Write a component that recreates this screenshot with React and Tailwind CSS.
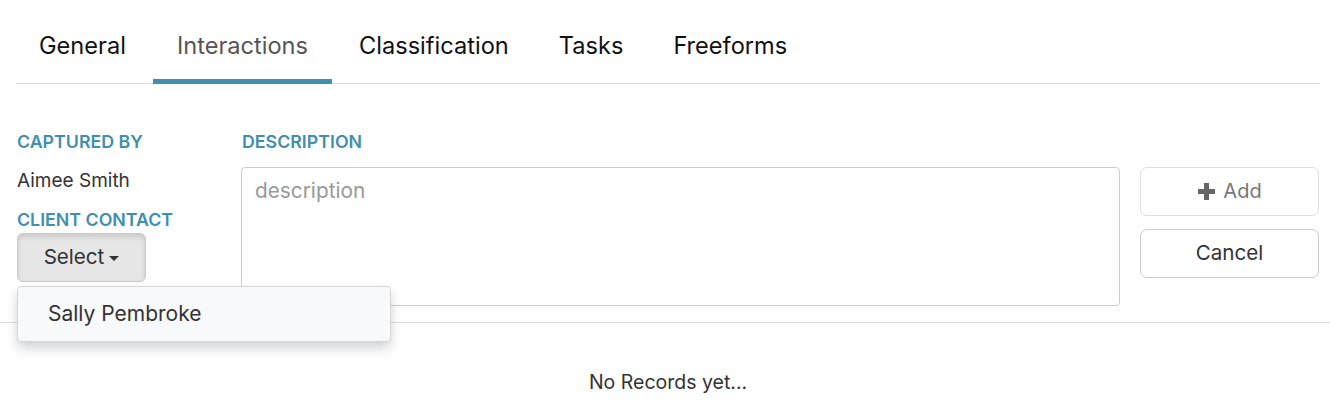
import React from "react";

const tabs = ["General", "Interactions", "Classification", "Tasks", "Freeforms"];

export default function App() {
  return (
    <div className="w-[1330px] h-[412px] bg-white overflow-hidden text-[#333]" style={{ fontFamily: "Inter, 'Noto Sans', sans-serif" }}>
      {/* Tabs */}
      <div className="ml-[16px] mr-[10px] h-[84px] border-b border-[#dddddd] flex gap-[4px]">
        {tabs.map((t) => {
          const active = t === "Interactions";
          return (
            <div
              key={t}
              className={
                active
                  ? "px-[24px] pt-[32px] pb-[20px] h-[84px] border-b-[5px] border-[#3f8fae] text-[23.6px] leading-[27px] text-[#555555]"
                  : "px-[23px] pt-[32px] pb-[20px] h-[84px] border-b-[5px] border-transparent text-[23.6px] leading-[27px] text-[#111111]"
              }
            >
              {t}
            </div>
          );
        })}
      </div>

      {/* Form */}
      <div className="pl-[17px] pr-[11px] pt-[48px] pb-[16px] flex">
        <div className="w-[224px] flex flex-col">
          <div className="text-[17.8px] leading-[20px] font-semibold text-[#3f8fae]">CAPTURED BY</div>
          <div className="mt-[17px] text-[19px] leading-[24px] text-[#333]">Aimee Smith</div>
          <div className="mt-[17px] text-[17.8px] leading-[20px] font-semibold text-[#3f8fae]">CLIENT CONTACT</div>
          <div className="relative mt-[3px]">
            <button className="w-[129px] h-[49px] rounded-[6px] bg-[#e6e6e6] border border-[#c8c8c8] shadow-[inset_0_3px_5px_rgba(0,0,0,0.125)] flex items-center justify-center gap-[5px] text-[20.6px] text-[#333]">
              <span>Select</span>
              <span className="w-0 h-0 border-l-[5px] border-r-[5px] border-t-[5px] border-l-transparent border-r-transparent border-t-[#333] mt-[2px]"></span>
            </button>
            <div className="absolute left-0 top-[53px] w-[374px] h-[56px] bg-[#f8f9fa] border border-[#d6d6d6] rounded-[4px] shadow-[0_6px_12px_rgba(0,0,0,0.175)] flex items-center pl-[30px] text-[21px] text-[#333] z-10">
              Sally Pembroke
            </div>
          </div>
        </div>

        <div className="w-[879px] flex flex-col">
          <div className="text-[17.8px] leading-[20px] font-semibold text-[#3f8fae] pl-[1px]">DESCRIPTION</div>
          <div className="mt-[14.5px] h-[139px] border border-[#cccccc] rounded-[4px] px-[13px] pt-[10px] text-[20.8px] leading-[26px] text-[#999999]">
            description
          </div>
        </div>

        <div className="ml-[20px] pt-[34.5px] w-[179px] flex flex-col gap-[13px]">
          <button className="h-[49px] border border-[#dddddd] rounded-[7px] flex items-center justify-center gap-[7px] text-[20px] text-[#777777]">
            <svg width="19" height="19" viewBox="0 0 19 19"><path d="M9.5 1V18M1 9.5H18" stroke="#666" strokeWidth="5" /></svg>
            <span>Add</span>
          </button>
          <button className="h-[49px] border border-[#cccccc] rounded-[7px] flex items-center justify-center text-[20.6px] text-[#333]">
            Cancel
          </button>
        </div>
      </div>

      <div className="border-t border-[#dddddd]"></div>

      <div className="pt-[47px] text-center text-[19.5px] leading-[24px] text-[#333] pl-[6px]">No Records yet...</div>
    </div>
  );
}
